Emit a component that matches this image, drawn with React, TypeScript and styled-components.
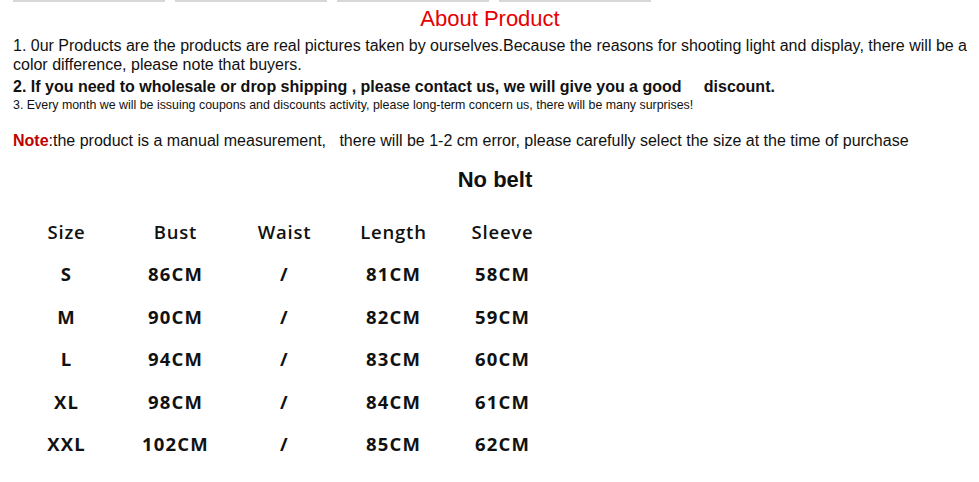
import React from 'react';
import styled, { createGlobalStyle } from 'styled-components';

const GlobalStyle = createGlobalStyle`
  body {
    margin: 0;
    background: #fff;
    font-family: 'Liberation Sans', Arial, sans-serif;
    color: #000;
  }
`;

const Page = styled.div`
  padding: 0 12px 0 13px;
  width: 979px;
  box-sizing: border-box;
`;

const BarRow = styled.div`
  display: flex;
  gap: 10px;
  height: 2px;
`;

const Bar = styled.div`
  width: 152px;
  height: 2px;
  background: #d8d8d8;
`;

const Title = styled.h1`
  margin: 4px 0 0;
  font-size: 22px;
  line-height: 26px;
  font-weight: 400;
  color: #e60000;
  text-align: center;
`;

const Para = styled.p<{ $size?: number; $bold?: boolean; $lh?: number; $top?: number }>`
  margin: ${p => p.$top ?? 0}px 0 0;
  font-size: ${p => p.$size ?? 16}px;
  line-height: ${p => p.$lh ?? 19}px;
  font-weight: ${p => (p.$bold ? 700 : 400)};
  color: #111;
`;

const NoteLabel = styled.span`
  color: #c00000;
  font-weight: 700;
`;

const TableTitle = styled.h2`
  margin: 17px 0 0;
  padding-left: 10px;
  font-size: 22px;
  line-height: 26px;
  font-weight: 700;
  text-align: center;
  color: #111;
`;

const SizeTable = styled.div`
  display: grid;
  grid-template-columns: repeat(5, 109px);
  grid-auto-rows: 42.4px;
  margin: 18px 0 0 -1px;
  font-family: 'Open Sans', 'Noto Sans', sans-serif;
  font-size: 18.5px;
  color: #111;
`;

const Cell = styled.div<{ $head?: boolean }>`
  text-align: center;
  line-height: 42px;
  font-weight: ${p => (p.$head ? 600 : 700)};
  letter-spacing: ${p => (p.$head ? 0.8 : 1.2)}px;
`;

const headers = ['Size', 'Bust', 'Waist', 'Length', 'Sleeve'];
const rows = [
  ['S', '86CM', '/', '81CM', '58CM'],
  ['M', '90CM', '/', '82CM', '59CM'],
  ['L', '94CM', '/', '83CM', '60CM'],
  ['XL', '98CM', '/', '84CM', '61CM'],
  ['XXL', '102CM', '/', '85CM', '62CM'],
];

const App: React.FC = () => {
  return (
    <>
      <GlobalStyle />
      <Page>
        <BarRow>
          <Bar />
          <Bar />
          <Bar />
          <Bar />
        </BarRow>
        <Title>About Product</Title>
        <Para $top={4}>
          1. 0ur Products are the products are real pictures taken by ourselves.Because the reasons for shooting light and display, there will be a color difference, please note that buyers.
        </Para>
        <Para $bold $lh={20} $top={3}>
          2. If you need to wholesale or drop shipping , please contact us, we will give you a good{'\u00a0\u00a0\u00a0\u00a0 '}discount.
        </Para>
        <Para $size={12.4} $lh={17}>
          3. Every month we will be issuing coupons and discounts activity, please long-term concern us, there will be many surprises!
        </Para>
        <Para $top={17}>
          <NoteLabel>Note</NoteLabel>:the product is a manual measurement,{'\u00a0\u00a0 '}there will be 1-2 cm error, please carefully select the size at the time of purchase
        </Para>
        <TableTitle>No belt</TableTitle>
        <SizeTable>
          {headers.map(h => (
            <Cell key={h} $head>{h}</Cell>
          ))}
          {rows.map(r => r.map((v, i) => <Cell key={r[0] + i}>{v}</Cell>))}
        </SizeTable>
      </Page>
    </>
  );
};

export default App;
